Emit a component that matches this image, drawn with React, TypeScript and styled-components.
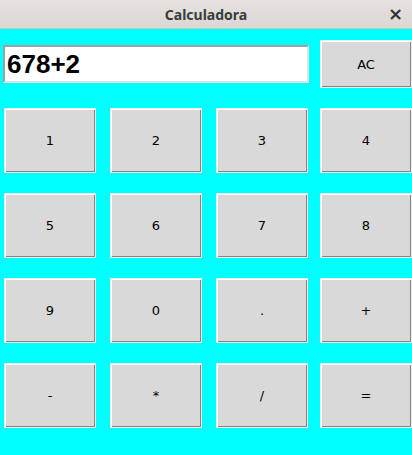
import React from "react";
import styled, { createGlobalStyle } from "styled-components";

const Global = createGlobalStyle`
  html, body { margin: 0; padding: 0; }
  body { width: 412px; height: 455px; overflow: hidden; background: #00ffff; }
`;

const Window = styled.div`
  width: 412px;
  height: 455px;
  display: flex;
  flex-direction: column;
  background: #00ffff;
`;

const TitleBar = styled.div`
  height: 29px;
  flex: 0 0 29px;
  box-sizing: border-box;
  background: linear-gradient(#e4e1de, #dcd8d4);
  border-bottom: 1px solid #c9c5c1;
  display: flex;
  align-items: center;
  justify-content: center;
  position: relative;
  font-family: "Noto Sans", "DejaVu Sans", sans-serif;
  font-weight: bold;
  font-size: 14px;
  color: #3a3c3c;
`;

const Close = styled.span`
  position: absolute;
  right: 9px;
  top: 3px;
  font-family: "DejaVu Sans", sans-serif;
  font-size: 18px;
  font-weight: bold;
  color: #2e3436;
`;

const Body = styled.div`
  padding-top: 11px;
  display: flex;
  flex-direction: column;
  gap: 20px;
`;

const TopRow = styled.div`
  display: flex;
  align-items: center;
  height: 48px;
`;

const Display = styled.div`
  box-sizing: border-box;
  margin-left: 3px;
  width: 306px;
  height: 38px;
  background: #fff;
  border-style: solid;
  border-width: 2px;
  border-color: #a0a0a0 #e2e2e2 #e2e2e2 #a0a0a0;
  display: flex;
  align-items: center;
  padding-left: 2px;
  font-family: "Liberation Sans", Arial, sans-serif;
  font-weight: bold;
  font-size: 26px;
  color: #000;
`;

const Key = styled.button<{ $h?: number }>`
  box-sizing: border-box;
  width: 92px;
  height: ${(p) => p.$h ?? 65}px;
  padding: 0;
  margin: 0;
  background: #d9d9d9;
  border: 1px solid #eeeeee;
  box-shadow: inset 1px 1px 0 #ffffff, inset -1px -1px 0 #858585;
  font-family: "DejaVu Sans", sans-serif;
  font-size: 13px;
  color: #000;
  display: flex;
  align-items: center;
  justify-content: center;
  outline: none;
`;

const AcKey = styled(Key)`
  margin-left: 11px;
`;

const Grid = styled.div`
  display: grid;
  grid-template-columns: 106px 106px 104px 92px;
  grid-auto-rows: 65px;
  row-gap: 20px;
  padding-left: 4px;
`;

const keys = ["1", "2", "3", "4", "5", "6", "7", "8", "9", "0", ".", "+", "-", "*", "/", "="];

export default function App() {
  return (
    <>
      <Global />
      <Window>
        <TitleBar>
          Calculadora
          <Close>×</Close>
        </TitleBar>
        <Body>
          <TopRow>
            <Display>678+2</Display>
            <AcKey $h={48}>AC</AcKey>
          </TopRow>
          <Grid>
            {keys.map((k) => (
              <Key key={k}>{k}</Key>
            ))}
          </Grid>
        </Body>
      </Window>
    </>
  );
}
